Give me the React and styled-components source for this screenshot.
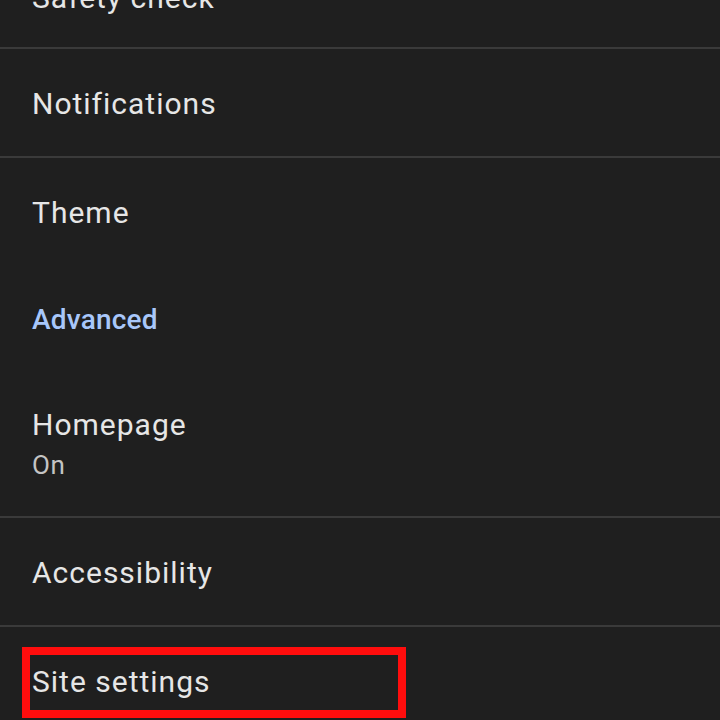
import styled, { createGlobalStyle } from "styled-components";

const Global = createGlobalStyle`
    html, body {
        margin: 0;
        padding: 0;
        background: #1f1f1f;
        overflow: hidden;
    }
`;

const Screen = styled.div`
    width: 720px;
    height: 720px;
    overflow: hidden;
    background: #1f1f1f;
    font-family: Roboto, "Noto Sans", sans-serif;
`;

const List = styled.div`
    display: flex;
    flex-direction: column;
    margin-top: -60px;
`;

const Row = styled.div`
    position: relative;
    display: flex;
    flex-direction: column;
    justify-content: center;
    padding: ${(p) => p.pad || "35px 32px 32px"};
    border-bottom: ${(p) => (p.divider ? "2px solid #3a3a3a" : "none")};
`;

const Title = styled.span`
    font-size: 30px;
    line-height: 40px;
    letter-spacing: 1px;
    color: #e6e6e6;
`;

const Sub = styled.span`
    font-size: 26px;
    line-height: 40px;
    letter-spacing: 0.6px;
    color: #c4c4c4;
`;

const Header = styled.div`
    padding: 35px 32px 31px;
    font-size: 28px;
    line-height: 40px;
    letter-spacing: 0.2px;
    font-weight: 500;
    color: #a8c7fa;
`;

const Highlight = styled.div`
    position: absolute;
    left: 22px;
    top: 20px;
    width: 384px;
    height: 71px;
    box-sizing: border-box;
    border: 8px solid #ff0d0d;
    pointer-events: none;
`;

const App = () => {
    return (
        <Screen>
            <Global />
            <List>
                <Row divider pad="38px 32px 29px">
                    <Title>Safety check</Title>
                </Row>
                <Row divider>
                    <Title>Notifications</Title>
                </Row>
                <Row>
                    <Title>Theme</Title>
                </Row>
                <Header>Advanced</Header>
                <Row divider pad="34px 32px 31px">
                    <Title>Homepage</Title>
                    <Sub>On</Sub>
                </Row>
                <Row divider>
                    <Title>Accessibility</Title>
                </Row>
                <Row>
                    <Title>Site settings</Title>
                    <Highlight />
                </Row>
            </List>
        </Screen>
    );
};

export default App;
